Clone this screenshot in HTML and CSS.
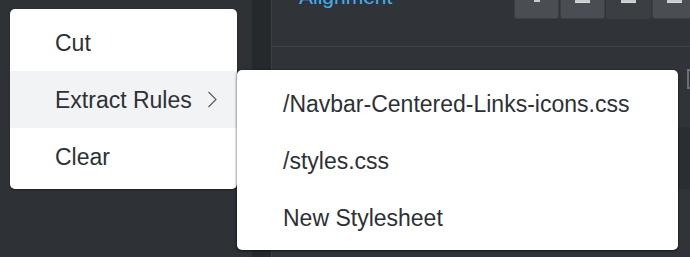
FILE: index.html
```html
<!DOCTYPE html>
<html>
<head>
<meta charset="utf-8">
<link rel="stylesheet" href="styles.css">
</head>
<body>
<div class="app">
  <div class="left"></div>
  <div class="rail"></div>
  <div class="panel">
    <div class="panel-head">
      <div class="label-cell"><span class="label">Alignment</span></div>
      <div class="toolbar">
        <div class="tbtn"><span class="ico-x"></span></div>
        <div class="tbtn"><span class="ico-lines"></span></div>
        <div class="tbtn tbtn-active"><span class="ico-lines"></span></div>
        <div class="tbtn"><span class="ico-lines"></span></div>
      </div>
    </div>
    <div class="panel-body">
      <div class="row row-a"><span class="sq-icon"></span></div>
      <div class="row row-b"></div>
      <div class="row row-c"></div>
    </div>
  </div>
</div>

<div class="menu menu-main">
  <div class="item">Cut</div>
  <div class="item item-hover">Extract Rules
    <svg class="chev" width="10" height="17" viewBox="0 0 10 17"><polyline points="1.5,1 9,8.5 1.5,16" fill="none" stroke="#5a5d61" stroke-width="1.2"/></svg>
  </div>
  <div class="item">Clear</div>
</div>

<div class="menu menu-sub">
  <div class="item">/Navbar-Centered-Links-icons.css</div>
  <div class="item">/styles.css</div>
  <div class="item">New Stylesheet</div>
</div>
</body>
</html>
```

FILE: styles.css
```css
html, body {
  margin: 0;
  padding: 0;
}
body {
  width: 690px;
  height: 257px;
  overflow: hidden;
  background: #2e3135;
  font-family: "Liberation Sans", Arial, Helvetica, sans-serif;
  position: relative;
}
.app {
  display: flex;
  height: 257px;
}
.left {
  width: 252px;
  flex: none;
  background: #2e3135;
}
.rail {
  width: 19px;
  flex: none;
  background: #26292c;
  border-right: 1px solid #3a3d42;
}
.panel {
  flex: 1;
  background: #303338;
  display: flex;
  flex-direction: column;
}
.panel-head {
  height: 46px;
  border-bottom: 1px solid #3e4146;
  display: grid;
  grid-template-columns: 242px auto;
  align-items: start;
}
.label-cell {
  padding-left: 27px;
  height: 8px;
  overflow: hidden;
  position: relative;
}
.label {
  display: block;
  color: #45aef2;
  font-size: 21px;
  line-height: 21px;
  margin-top: -14px;
}
.toolbar {
  display: flex;
  gap: 1px;
}
.tbtn {
  width: 43px;
  height: 18px;
  flex: none;
  background: #4a4e54;
  border: 1px solid #3c3f44;
  border-top: none;
  border-radius: 0 0 3px 3px;
  display: flex;
  justify-content: center;
  align-items: flex-start;
}
.tbtn-active {
  background: #3b3e43;
}
.ico-lines {
  display: block;
  width: 15px;
  height: 2px;
  margin-top: 2px;
  border-top: 1px solid #d8dadc;
  box-shadow: 0 -2px 0 0 #c8cacc;
}
.ico-x {
  display: block;
  width: 6px;
  height: 2px;
  background: #c8cacc;
  margin-top: 0;
}
.panel-body {
  flex: 1;
  display: flex;
  flex-direction: column;
}
.row {
  display: flex;
  justify-content: flex-end;
}
.row-a {
  height: 80px;
  padding-top: 22px;
  box-sizing: border-box;
}
.sq-icon {
  display: block;
  width: 12px;
  height: 16px;
  border: 2px solid #6c7075;
  margin-right: -6px;
  box-shadow: inset 2px 2px 0 #2e3135, inset 4px 4px 0 #6c7075;
}
.row-b {
  height: 62px;
  background: #2a2d31;
}
.row-c {
  flex: 1;
  background: #303338;
}

.menu {
  position: absolute;
  background: #ffffff;
  border-radius: 5px;
  padding: 5px 0 4px;
  box-sizing: border-box;
  color: #2d3136;
  font-size: 23px;
}
.menu-main {
  left: 10px;
  top: 9px;
  width: 227px;
  height: 180px;
  box-shadow: 0 1px 2px rgba(0, 0, 0, 0.35);
}
.menu-sub {
  left: 237px;
  top: 70px;
  width: 441px;
  height: 180px;
  box-shadow: 0 1px 3px rgba(0, 0, 0, 0.55), -1px 0 2px rgba(0, 0, 0, 0.12);
}
.item {
  height: 57px;
  line-height: 56px;
  padding-left: 45px;
  white-space: nowrap;
  display: flex;
  align-items: center;
}
.menu-sub .item {
  padding-left: 46px;
}
.item-hover {
  background: #f2f3f4;
}
.chev {
  margin-left: 15px;
  margin-top: -1px;
}
```
